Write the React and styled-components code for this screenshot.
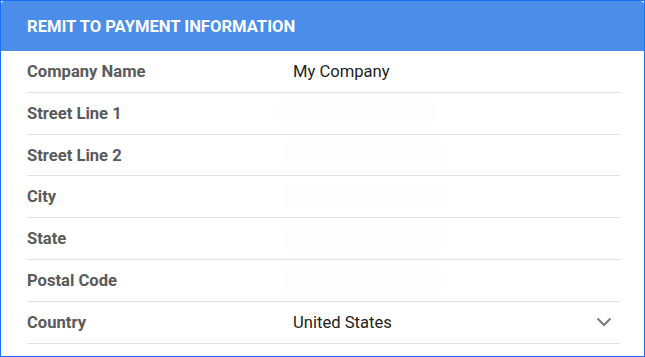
import React from "react";
import styled, { createGlobalStyle } from "styled-components";

const Global = createGlobalStyle`
  html, body { margin: 0; padding: 0; background: #ffffff; }
  body { font-family: Roboto, "Liberation Sans", Arial, sans-serif; }
  * { box-sizing: border-box; }
`;

const Frame = styled.div`
  width: 645px;
  height: 357px;
  border: 1px solid #1a70f2;
  background: #ffffff;
`;

const Card = styled.section`
  height: 100%;
  border-radius: 4px;
  overflow: hidden;
  background: #ffffff;
  display: flex;
  flex-direction: column;
`;

const Header = styled.header`
  height: 50px;
  flex: none;
  background: #4a8ee9;
  color: #ffffff;
  display: flex;
  align-items: center;
  padding: 0 26px;
  font-size: 16.6px;
  font-weight: 700;
`;

const Body = styled.div`
  padding: 0 24px 0 26px;
`;

const Row = styled.div`
  height: 41.83px;
  display: grid;
  grid-template-columns: 266px 1fr auto;
  align-items: center;
  border-bottom: 1px solid #e2e2e2;
  padding-right: 8px;
`;

const Label = styled.div`
  font-size: 16.6px;
  font-weight: 700;
  color: #5a5a5a;
`;

const Value = styled.div`
  font-size: 16.6px;
  color: #222222;
`;

const Ghost = styled.div`
  height: ${(p) => p.$h}px;
  width: ${(p) => p.$w}px;
  margin-left: ${(p) => p.$x}px;
  margin-top: -2px;
  background: #fbfefa;
  border-radius: 2px;
`;

const Chevron = () => (
  <svg width="16" height="10" viewBox="0 0 16 10">
    <path d="M1.5 1.5 L8 8 L14.5 1.5" fill="none" stroke="#7a7a7a" strokeWidth="2" />
  </svg>
);

const rows = [
  { label: "Company Name", value: "My Company" },
  { label: "Street Line 1", ghost: { x: -17, w: 160, h: 20 } },
  { label: "Street Line 2", ghost: { x: -9, w: 157, h: 22 } },
  { label: "City", ghost: { x: -9, w: 157, h: 22 } },
  { label: "State", ghost: { x: -9, w: 157, h: 22 } },
  { label: "Postal Code", ghost: { x: -9, w: 157, h: 22 } },
  { label: "Country", value: "United States", select: true },
];

export default function App() {
  return (
    <>
      <Global />
      <Frame>
        <Card>
          <Header>REMIT TO PAYMENT INFORMATION</Header>
          <Body>
            {rows.map((r) => (
              <Row key={r.label}>
                <Label>{r.label}</Label>
                {r.ghost ? (
                  <Ghost $x={r.ghost.x} $w={r.ghost.w} $h={r.ghost.h} />
                ) : (
                  <Value>{r.value}</Value>
                )}
                {r.select ? <Chevron /> : <span />}
              </Row>
            ))}
          </Body>
        </Card>
      </Frame>
    </>
  );
}
